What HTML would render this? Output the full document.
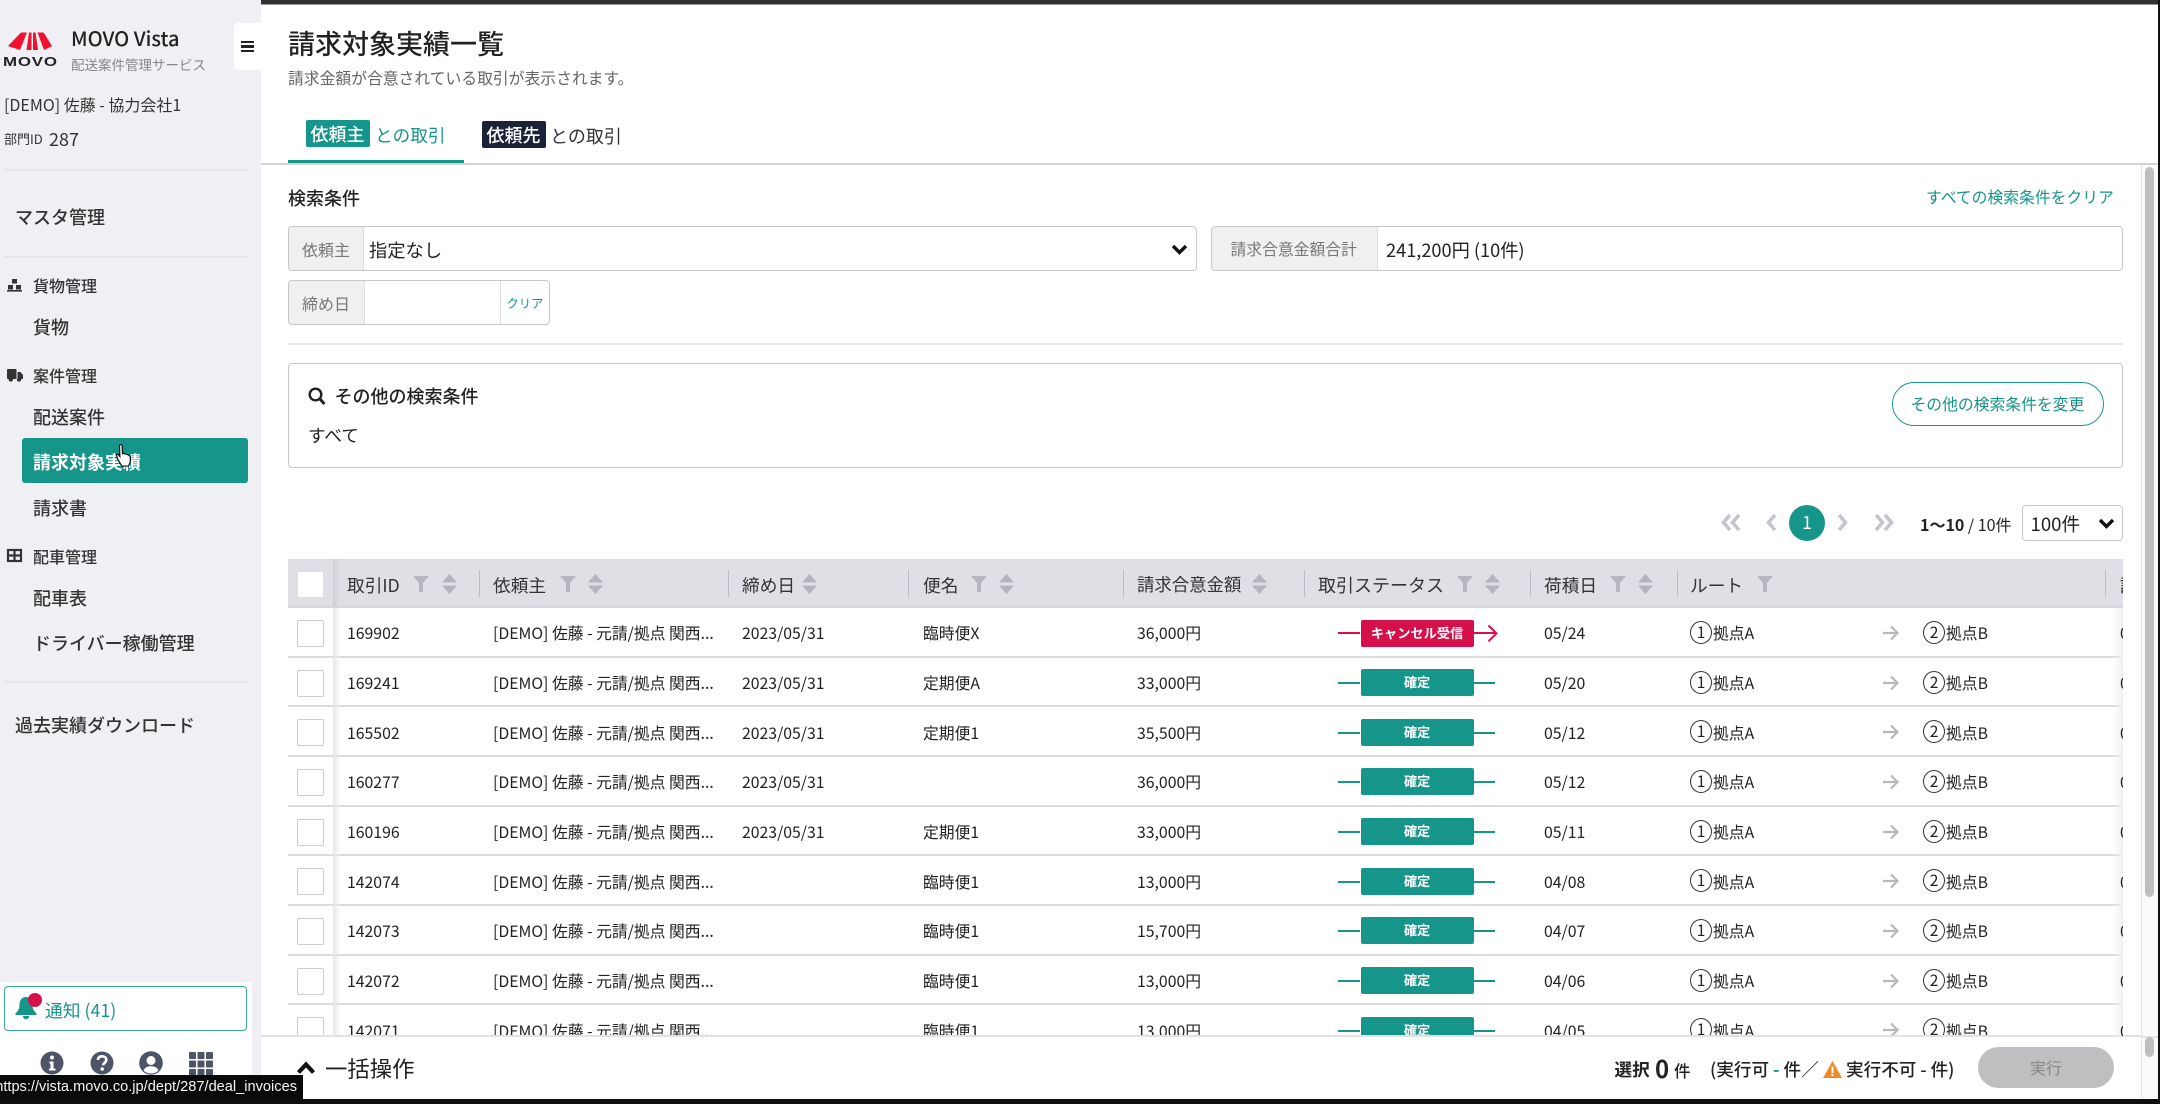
<!DOCTYPE html>
<html lang="ja">
<head>
<meta charset="utf-8">
<title>請求対象実績一覧</title>
<style>
html,body{margin:0;padding:0;background:#fff;}
body{width:2160px;height:1104px;overflow:hidden;position:relative;font-family:"Noto Sans CJK JP","Liberation Sans",sans-serif;color:#222;}
#w{position:absolute;left:0;top:0;width:2160px;height:1104px;overflow:hidden;background:#fff;filter:blur(.35px);}
.a{position:absolute;}
.t{position:absolute;white-space:nowrap;line-height:0;}
svg{position:absolute;display:block;overflow:visible;}
#side{position:absolute;left:0;top:0;width:261px;height:1104px;background:#f0eff3;}
.hr{position:absolute;left:4px;width:244px;height:2px;background:#e6e5e9;}
.nav{font-size:18px;left:33px;color:#333;font-weight:500;}
.grp{font-size:16px;left:33px;color:#333;font-weight:500;}
.lab{position:absolute;background:#f0eff2;border-right:1px solid #ddd;box-sizing:border-box;color:#777;font-size:16px;}
.box{position:absolute;border:1.5px solid #c8c8c8;border-radius:4px;box-sizing:border-box;background:#fff;overflow:hidden;}
#thead{position:absolute;left:288px;top:559px;width:1835px;height:49px;background:#dfdfe5;border-bottom:2px solid #d6d6dc;box-sizing:border-box;overflow:hidden;}
#thead .t{top:25.5px;font-size:17.7px;color:#333;}
.dv{position:absolute;top:11px;width:1px;height:27px;background:#bcbcc4;}
.f{top:17px;}
.s{top:15px;}
#rows{position:absolute;left:288px;top:608px;width:1835px;height:428px;overflow:hidden;}
.r{position:absolute;left:0;width:1835px;height:49.65px;border-bottom:2px solid #dcdcdc;box-sizing:border-box;}
.r .t{top:25.4px;font-size:15.8px;color:#222;}
.ck{position:absolute;left:9px;top:12px;width:27px;height:27px;border:1.5px solid #ccc;border-radius:2px;background:#fff;box-sizing:border-box;}
.c1{left:59px}.c2{left:205px}.c3{left:454px}.c4{left:635px}.c5{left:849px}.c6{left:1256px}.c7{left:1832px;z-index:3;}
.b{position:absolute;left:1072.5px;top:11.5px;width:113px;height:27px;border-radius:2px;background:#16958a;color:#fff;font-size:13.2px;font-weight:700;text-align:center;line-height:26px;}
.ln{position:absolute;top:24.4px;height:2px;background:#16958a;width:22px;}
.n{position:absolute;top:13px;width:22px;height:23px;border:1.5px solid #333;border-radius:50%;box-sizing:border-box;font-size:15.5px;text-align:center;line-height:20px;color:#222;}
.n1{left:1402px}.n2{left:1635px}
.p1{left:1425px}.p2{left:1658px}
.ar{left:1595px;top:17px;}
</style>
</head>
<body>
<div id="w">
<div class="a" style="left:0;top:0;width:2160px;height:4px;background:#303030;"></div>
<div class="a" style="left:0;top:4px;width:2160px;height:1px;background:#999;"></div>

<div id="side">
  <svg style="left:0;top:0" width="60" height="70">
    <polygon points="8,46 21,32.5 27,32.5 20,50" fill="#f0102f"/>
    <polygon points="29,32.5 31.5,32.5 31.5,50 26.5,50" fill="#f0102f"/>
    <polygon points="33,32.5 35.5,32.5 38,50 33,50" fill="#f0102f"/>
    <polygon points="37.5,32.5 43.5,32.5 52,46 44,50" fill="#f0102f"/>
  </svg>
  <div class="t" style="left:3px;top:61.5px;font:700 12.6px/0 'Liberation Sans',sans-serif;letter-spacing:.6px;transform:scaleX(1.34);transform-origin:left center;color:#222;">MOVO</div>
  <div class="t" style="left:71px;top:38px;font-size:20px;font-weight:500;color:#222;">MOVO Vista</div>
  <div class="t" style="left:71px;top:64px;font-size:13.5px;color:#888;">配送案件管理サービス</div>
  <div class="a" style="left:234px;top:23px;width:27px;height:47px;background:#fff;border-radius:4px 0 0 4px;"></div>
  <div class="a" style="left:241px;top:41px;width:13px;height:2.4px;background:#222;"></div>
  <div class="a" style="left:241px;top:45.3px;width:13px;height:2.4px;background:#222;"></div>
  <div class="a" style="left:241px;top:49.6px;width:13px;height:2.4px;background:#222;"></div>

  <div class="t" style="left:4px;top:104px;font-size:16px;color:#333;">[DEMO] 佐藤 - 協力会社1</div>
  <div class="t" style="left:4px;top:139px;font-size:13px;color:#333;">部門ID</div>
  <div class="t" style="left:49px;top:139px;font-size:18px;color:#333;">287</div>
  <div class="hr" style="top:169px;"></div>
  <div class="t" style="left:15px;top:217px;font-size:18px;font-weight:500;color:#333;">マスタ管理</div>
  <div class="hr" style="top:256px;"></div>

  <svg style="left:7px;top:279px" width="15" height="13" fill="#333"><rect x="5" y="0" width="5" height="4.5"/><rect x="1" y="6" width="5" height="4.5"/><rect x="9" y="6" width="5" height="4.5"/><rect x="0" y="11" width="15" height="1.6"/></svg>
  <div class="t grp" style="top:285px;">貨物管理</div>
  <div class="t nav" style="top:327px;">貨物</div>

  <svg style="left:7px;top:369px" width="16" height="13" fill="#333"><rect x="0" y="0" width="9.5" height="10" rx="1"/><path d="M10.5 3h3l2.5 3v4h-5.5z"/><circle cx="3.8" cy="10.5" r="2.2"/><circle cx="12" cy="10.5" r="2.2"/></svg>
  <div class="t grp" style="top:375px;">案件管理</div>
  <div class="t nav" style="top:417px;">配送案件</div>

  <div class="a" style="left:21.5px;top:438px;width:226px;height:45px;background:#16958a;border-radius:3px;"></div>
  <div class="t" style="left:33px;top:461.5px;font-size:18px;font-weight:700;color:#fff;">請求対象実績</div>
  <svg style="left:115px;top:443px" width="18" height="27" viewBox="0 0 16 24"><path d="M4 2c1-1 2.300-.5 2.400.8l.3 6.700 1-.2 1 .3 1.200 .2 1.400 .6c1.300 .5 2.400 1.300 2.400 2.700l-.2 3.900-1.500 3.500H6L2.500 14.500 1.300 11c0-1 1-1.300 1.800-.6l1.200 1.600z" fill="#fff" stroke="#111" stroke-width="1.100"/></svg>

  <div class="t nav" style="top:508px;">請求書</div>
  <svg style="left:7px;top:549px" width="15" height="13" fill="none" stroke="#333" stroke-width="2.200"><rect x="1" y="1" width="13" height="11"/><path d="M1 6.500h13M7.500 1v11"/></svg>
  <div class="t grp" style="top:556px;">配車管理</div>
  <div class="t nav" style="top:598px;">配車表</div>
  <div class="t nav" style="top:642.5px;">ドライバー稼働管理</div>
  <div class="hr" style="top:681px;"></div>
  <div class="t" style="left:15px;top:725px;font-size:18px;font-weight:500;color:#333;">過去実績ダウンロード</div>

  <div class="a" style="left:0;top:982px;width:252px;height:100px;background:#fff;"></div>
  <div class="a" style="left:4px;top:986px;width:243px;height:45px;border:1.5px solid #3aa99e;border-radius:4px;box-sizing:border-box;"></div>
  <svg style="left:15px;top:996px" width="22" height="24" viewBox="0 0 22 24"><path d="M11 1c4.500 0 6.500 3.500 6.500 8 0 4 1.500 6 4 8.500V19H.5v-1.500C3 15 4.500 13 4.500 9 4.500 4.500 6.500 1 11 1z" fill="#16958a"/><path d="M8 20h6c0 2-1.300 3.200-3 3.200S8 22 8 20z" fill="#16958a"/></svg>
  <div class="a" style="left:27.500px;top:992.500px;width:14px;height:14px;border-radius:50%;background:#d5104a;"></div>
  <div class="t" style="left:45px;top:1010px;font-size:17.8px;color:#16958a;">通知 (41)</div>

  <svg style="left:40px;top:1051px" width="24" height="24"><circle cx="12" cy="12" r="11.500" fill="#4e5468"/><circle cx="12" cy="6.500" r="2" fill="#fff"/><path d="M9.500 10.500h4v7h2v2h-6.500v-2h1.500v-5h-1z" fill="#fff"/></svg>
  <svg style="left:90px;top:1051px" width="24" height="24"><circle cx="12" cy="12" r="11.500" fill="#4e5468"/><path d="M7.800 9c.3-2.500 2-3.700 4.300-3.700 2.400 0 4.200 1.400 4.200 3.500 0 3-3.200 3-3.200 5.500" fill="none" stroke="#fff" stroke-width="2.600"/><circle cx="12.200" cy="18" r="1.800" fill="#fff"/></svg>
  <svg style="left:139px;top:1051px" width="24" height="24"><circle cx="12" cy="12" r="11.800" fill="#4e5468"/><circle cx="12" cy="9.500" r="4.500" fill="#fff"/><path d="M4.500 19.500c1.500-3 4-4.200 7.500-4.200s6 1.200 7.500 4.200c-2 2-4.500 3-7.500 3s-5.500-1-7.500-3z" fill="#fff"/></svg>
  <svg style="left:189px;top:1052px" width="24" height="24" fill="#4e5468"><rect x="0" y="0" width="7" height="7" rx="1"/><rect x="8.500" y="0" width="7" height="7" rx="1"/><rect x="17" y="0" width="7" height="7" rx="1"/><rect x="0" y="8.500" width="7" height="7" rx="1"/><rect x="8.500" y="8.500" width="7" height="7" rx="1"/><rect x="17" y="8.500" width="7" height="7" rx="1"/><rect x="0" y="17" width="7" height="7" rx="1"/><rect x="8.500" y="17" width="7" height="7" rx="1"/><rect x="17" y="17" width="7" height="7" rx="1"/></svg>
</div>

<!-- header -->
<div class="t" style="left:288px;top:43px;font-size:27px;font-weight:500;color:#222;">請求対象実績一覧</div>
<div class="t" style="left:288px;top:78px;font-size:15.8px;color:#666;">請求金額が合意されている取引が表示されます。</div>

<div class="a" style="left:306px;top:120px;width:64px;height:27px;background:#16958a;border-radius:2px;"></div>
<div class="t" style="left:310.500px;top:134px;font-size:18px;font-weight:500;color:#fff;">依頼主</div>
<div class="t" style="left:375px;top:135px;font-size:17.7px;color:#16958a;">との取引</div>
<div class="a" style="left:482px;top:121px;width:64px;height:27px;background:#1a2238;border-radius:2px;"></div>
<div class="t" style="left:486.500px;top:135px;font-size:18px;font-weight:500;color:#fff;">依頼先</div>
<div class="t" style="left:550px;top:136px;font-size:18px;color:#333;">との取引</div>
<div class="a" style="left:261px;top:163px;width:1899px;height:2px;background:#d4d4d4;"></div>
<div class="a" style="left:288px;top:160px;width:176px;height:3px;background:#16958a;"></div>

<!-- search -->
<div class="t" style="left:288px;top:198px;font-size:18px;font-weight:500;color:#222;">検索条件</div>
<div class="t" style="left:1926px;top:197px;font-size:15.8px;color:#16958a;">すべての検索条件をクリア</div>

<div class="box" style="left:288px;top:226px;width:909px;height:44.500px;">
  <div class="lab" style="left:0;top:0;width:75px;height:43px;"></div>
  <div class="t" style="left:13px;top:21.500px;font-size:16px;color:#777;">依頼主</div>
  <div class="t" style="left:80px;top:23px;font-size:18.300px;color:#222;">指定なし</div>
  <svg style="left:882px;top:17px" width="17" height="11"><path d="M2 2l6.500 6.500L15 2" fill="none" stroke="#111" stroke-width="3.400"/></svg>
</div>
<div class="box" style="left:1211px;top:226px;width:912px;height:44.500px;">
  <div class="lab" style="left:0;top:0;width:166px;height:43px;"></div>
  <div class="t" style="left:18.500px;top:21.500px;font-size:15.800px;color:#777;">請求合意金額合計</div>
  <div class="t" style="left:174px;top:22.500px;font-size:18.200px;color:#222;">241,200円 (10件)</div>
</div>

<div class="box" style="left:288px;top:280px;width:262px;height:45px;">
  <div class="lab" style="left:0;top:0;width:76px;height:43px;"></div>
  <div class="t" style="left:13px;top:22px;font-size:16px;color:#777;">締め日</div>
  <div class="a" style="left:211px;top:0;width:1px;height:43px;background:#ddd;"></div>
  <div class="t" style="left:217.500px;top:22px;font-size:12.300px;color:#16958a;">クリア</div>
</div>

<div class="a" style="left:288px;top:343px;width:1835px;height:1.500px;background:#e6e6e6;"></div>

<div class="box" style="left:288px;top:363px;width:1835px;height:105px;">
  <svg style="left:19px;top:23px" width="18" height="19"><circle cx="7.500" cy="7.500" r="5.800" fill="none" stroke="#222" stroke-width="2.400"/><path d="M11.500 11.500l5 5.500" stroke="#222" stroke-width="3"/></svg>
  <div class="t" style="left:45.500px;top:32px;font-size:18px;font-weight:500;color:#222;">その他の検索条件</div>
  <div class="t" style="left:19px;top:72px;font-size:17.600px;color:#222;">すべて</div>
</div>
<div class="a" style="left:1892px;top:382px;width:212px;height:44px;border:1.500px solid #16958a;border-radius:22px;box-sizing:border-box;background:#fff;"></div>
<div class="t" style="left:1910.500px;top:403.500px;font-size:15.800px;color:#16958a;">その他の検索条件を変更</div>

<!-- pagination -->
<svg style="left:1721px;top:513px" width="20" height="19" fill="none" stroke="#c4c4cc" stroke-width="3.600"><path d="M9 2L2.500 9.500 9 17M18 2l-6.500 7.500L18 17"/></svg>
<svg style="left:1766px;top:513px" width="11" height="19" fill="none" stroke="#c4c4cc" stroke-width="3.600"><path d="M9 2L2.500 9.500 9 17"/></svg>
<div class="a" style="left:1789px;top:505px;width:36px;height:36px;border-radius:50%;background:#16958a;color:#fff;font-size:18px;text-align:center;line-height:35px;">1</div>
<svg style="left:1837px;top:513px" width="11" height="19" fill="none" stroke="#c4c4cc" stroke-width="3.600"><path d="M2 2l6.500 7.500L2 17"/></svg>
<svg style="left:1874px;top:513px" width="20" height="19" fill="none" stroke="#c4c4cc" stroke-width="3.600"><path d="M2 2l6.500 7.500L2 17M11 2l6.500 7.500L11 17"/></svg>
<div class="t" style="left:1920px;top:524px;font-size:16px;color:#222;"><b>1〜10</b> / 10件</div>
<div class="box" style="left:2021.500px;top:505px;width:101px;height:36px;">
  <div class="t" style="left:8px;top:17.500px;font-size:18.600px;color:#222;">100件</div>
  <svg style="left:75px;top:12px" width="17" height="11"><path d="M2 2l6.500 6.500L15 2" fill="none" stroke="#111" stroke-width="3.400"/></svg>
</div>

<!-- table head -->
<div id="thead">
  <div class="a" style="left:9px;top:11.500px;width:27px;height:27px;background:#fff;border:1px solid #ddd;border-radius:2px;box-sizing:border-box;"></div>
  <div class="a" style="left:45px;top:0;width:7px;height:49px;background:linear-gradient(90deg,#cfcfd6,#dfdfe5);"></div>
  <div class="t" style="left:59px;">取引ID</div>
  <svg class="f" style="left:125px" width="16" height="16"><path d="M0 0h16L10 7V16H6V7z" fill="#b6b6be"/></svg>
  <svg class="s" style="left:154px" width="15" height="20"><path d="M7.500 0L15 8.500H0zM0 11.500h15L7.500 20z" fill="#b4b4bd"/></svg>
  <div class="dv" style="left:191px;"></div>
  <div class="t" style="left:205px;">依頼主</div>
  <svg class="f" style="left:272px" width="16" height="16"><path d="M0 0h16L10 7V16H6V7z" fill="#b6b6be"/></svg>
  <svg class="s" style="left:300px" width="15" height="20"><path d="M7.500 0L15 8.500H0zM0 11.500h15L7.500 20z" fill="#b4b4bd"/></svg>
  <div class="dv" style="left:439.500px;"></div>
  <div class="t" style="left:454px;">締め日</div>
  <svg class="s" style="left:514px" width="15" height="20"><path d="M7.500 0L15 8.500H0zM0 11.500h15L7.500 20z" fill="#b4b4bd"/></svg>
  <div class="dv" style="left:620px;"></div>
  <div class="t" style="left:635px;">便名</div>
  <svg class="f" style="left:683px" width="16" height="16"><path d="M0 0h16L10 7V16H6V7z" fill="#b6b6be"/></svg>
  <svg class="s" style="left:711px" width="15" height="20"><path d="M7.500 0L15 8.500H0zM0 11.500h15L7.500 20z" fill="#b4b4bd"/></svg>
  <div class="dv" style="left:834.500px;"></div>
  <div class="t" style="left:849px;font-size:17.400px;">請求合意金額</div>
  <svg class="s" style="left:964px" width="15" height="20"><path d="M7.500 0L15 8.500H0zM0 11.500h15L7.500 20z" fill="#b4b4bd"/></svg>
  <div class="dv" style="left:1015.500px;"></div>
  <div class="t" style="left:1030px;font-size:18px;">取引ステータス</div>
  <svg class="f" style="left:1169px" width="16" height="16"><path d="M0 0h16L10 7V16H6V7z" fill="#b6b6be"/></svg>
  <svg class="s" style="left:1197px" width="15" height="20"><path d="M7.500 0L15 8.500H0zM0 11.500h15L7.500 20z" fill="#b4b4bd"/></svg>
  <div class="dv" style="left:1241.500px;"></div>
  <div class="t" style="left:1256px;">荷積日</div>
  <svg class="f" style="left:1322px" width="16" height="16"><path d="M0 0h16L10 7V16H6V7z" fill="#b6b6be"/></svg>
  <svg class="s" style="left:1350px" width="15" height="20"><path d="M7.500 0L15 8.500H0zM0 11.500h15L7.500 20z" fill="#b4b4bd"/></svg>
  <div class="dv" style="left:1388.500px;"></div>
  <div class="t" style="left:1402px;">ルート</div>
  <svg class="f" style="left:1469px" width="16" height="16"><path d="M0 0h16L10 7V16H6V7z" fill="#b6b6be"/></svg>
  <div class="dv" style="left:1817px;"></div>
  <div class="t" style="left:1832px;color:#222;">請</div>
</div>

<!-- rows -->
<div id="rows">
  <div class="a" style="left:1825px;top:0;width:10px;height:428px;background:linear-gradient(270deg,#f0f0f0,rgba(255,255,255,0));z-index:2;"></div>
  <div class="r" style="top:0;">
    <div class="ck"></div><div class="t c1">169902</div><div class="t c2">[DEMO] 佐藤 - 元請/拠点 関西...</div><div class="t c3">2023/05/31</div><div class="t c4">臨時便X</div><div class="t c5">36,000円</div>
    <div class="ln" style="left:1050px;background:#d5104a;"></div><div class="ln" style="left:1185px;background:#d5104a;"></div>
    <svg style="left:1199px;top:16px" width="11" height="18" fill="none" stroke="#d5104a" stroke-width="2"><path d="M1.500 1.500l8 7.900-8 7.900"/></svg>
    <div class="b" style="background:#d5104a;">キャンセル受信</div>
    <div class="t c6">05/24</div><div class="n n1">1</div><div class="t p1">拠点A</div>
    <svg class="ar" width="16" height="16" fill="none" stroke="#b8b8b8" stroke-width="2.200"><path d="M0 8h14M8 1.500l6.500 6.500L8 14.500"/></svg>
    <div class="n n2">2</div><div class="t p2">拠点B</div><div class="t c7">0</div>
  </div>
  <div class="r" style="top:49.650px;">
    <div class="ck"></div><div class="t c1">169241</div><div class="t c2">[DEMO] 佐藤 - 元請/拠点 関西...</div><div class="t c3">2023/05/31</div><div class="t c4">定期便A</div><div class="t c5">33,000円</div>
    <div class="ln" style="left:1050px;"></div><div class="ln" style="left:1185px;"></div><div class="b">確定</div>
    <div class="t c6">05/20</div><div class="n n1">1</div><div class="t p1">拠点A</div>
    <svg class="ar" width="16" height="16" fill="none" stroke="#b8b8b8" stroke-width="2.200"><path d="M0 8h14M8 1.500l6.500 6.500L8 14.500"/></svg>
    <div class="n n2">2</div><div class="t p2">拠点B</div><div class="t c7">0</div>
  </div>
  <div class="r" style="top:99.300px;">
    <div class="ck"></div><div class="t c1">165502</div><div class="t c2">[DEMO] 佐藤 - 元請/拠点 関西...</div><div class="t c3">2023/05/31</div><div class="t c4">定期便1</div><div class="t c5">35,500円</div>
    <div class="ln" style="left:1050px;"></div><div class="ln" style="left:1185px;"></div><div class="b">確定</div>
    <div class="t c6">05/12</div><div class="n n1">1</div><div class="t p1">拠点A</div>
    <svg class="ar" width="16" height="16" fill="none" stroke="#b8b8b8" stroke-width="2.200"><path d="M0 8h14M8 1.500l6.500 6.500L8 14.500"/></svg>
    <div class="n n2">2</div><div class="t p2">拠点B</div><div class="t c7">0</div>
  </div>
  <div class="r" style="top:148.950px;">
    <div class="ck"></div><div class="t c1">160277</div><div class="t c2">[DEMO] 佐藤 - 元請/拠点 関西...</div><div class="t c3">2023/05/31</div><div class="t c5">36,000円</div>
    <div class="ln" style="left:1050px;"></div><div class="ln" style="left:1185px;"></div><div class="b">確定</div>
    <div class="t c6">05/12</div><div class="n n1">1</div><div class="t p1">拠点A</div>
    <svg class="ar" width="16" height="16" fill="none" stroke="#b8b8b8" stroke-width="2.200"><path d="M0 8h14M8 1.500l6.500 6.500L8 14.500"/></svg>
    <div class="n n2">2</div><div class="t p2">拠点B</div><div class="t c7">0</div>
  </div>
  <div class="r" style="top:198.600px;">
    <div class="ck"></div><div class="t c1">160196</div><div class="t c2">[DEMO] 佐藤 - 元請/拠点 関西...</div><div class="t c3">2023/05/31</div><div class="t c4">定期便1</div><div class="t c5">33,000円</div>
    <div class="ln" style="left:1050px;"></div><div class="ln" style="left:1185px;"></div><div class="b">確定</div>
    <div class="t c6">05/11</div><div class="n n1">1</div><div class="t p1">拠点A</div>
    <svg class="ar" width="16" height="16" fill="none" stroke="#b8b8b8" stroke-width="2.200"><path d="M0 8h14M8 1.500l6.500 6.500L8 14.500"/></svg>
    <div class="n n2">2</div><div class="t p2">拠点B</div><div class="t c7">0</div>
  </div>
  <div class="r" style="top:248.250px;">
    <div class="ck"></div><div class="t c1">142074</div><div class="t c2">[DEMO] 佐藤 - 元請/拠点 関西...</div><div class="t c4">臨時便1</div><div class="t c5">13,000円</div>
    <div class="ln" style="left:1050px;"></div><div class="ln" style="left:1185px;"></div><div class="b">確定</div>
    <div class="t c6">04/08</div><div class="n n1">1</div><div class="t p1">拠点A</div>
    <svg class="ar" width="16" height="16" fill="none" stroke="#b8b8b8" stroke-width="2.200"><path d="M0 8h14M8 1.500l6.500 6.500L8 14.500"/></svg>
    <div class="n n2">2</div><div class="t p2">拠点B</div><div class="t c7">0</div>
  </div>
  <div class="r" style="top:297.900px;">
    <div class="ck"></div><div class="t c1">142073</div><div class="t c2">[DEMO] 佐藤 - 元請/拠点 関西...</div><div class="t c4">臨時便1</div><div class="t c5">15,700円</div>
    <div class="ln" style="left:1050px;"></div><div class="ln" style="left:1185px;"></div><div class="b">確定</div>
    <div class="t c6">04/07</div><div class="n n1">1</div><div class="t p1">拠点A</div>
    <svg class="ar" width="16" height="16" fill="none" stroke="#b8b8b8" stroke-width="2.200"><path d="M0 8h14M8 1.500l6.500 6.500L8 14.500"/></svg>
    <div class="n n2">2</div><div class="t p2">拠点B</div><div class="t c7">0</div>
  </div>
  <div class="r" style="top:347.550px;">
    <div class="ck"></div><div class="t c1">142072</div><div class="t c2">[DEMO] 佐藤 - 元請/拠点 関西...</div><div class="t c4">臨時便1</div><div class="t c5">13,000円</div>
    <div class="ln" style="left:1050px;"></div><div class="ln" style="left:1185px;"></div><div class="b">確定</div>
    <div class="t c6">04/06</div><div class="n n1">1</div><div class="t p1">拠点A</div>
    <svg class="ar" width="16" height="16" fill="none" stroke="#b8b8b8" stroke-width="2.200"><path d="M0 8h14M8 1.500l6.500 6.500L8 14.500"/></svg>
    <div class="n n2">2</div><div class="t p2">拠点B</div><div class="t c7">0</div>
  </div>
  <div class="r" style="top:397.200px;">
    <div class="ck"></div><div class="t c1">142071</div><div class="t c2">[DEMO] 佐藤 - 元請/拠点 関西...</div><div class="t c4">臨時便1</div><div class="t c5">13,000円</div>
    <div class="ln" style="left:1050px;"></div><div class="ln" style="left:1185px;"></div><div class="b">確定</div>
    <div class="t c6">04/05</div><div class="n n1">1</div><div class="t p1">拠点A</div>
    <svg class="ar" width="16" height="16" fill="none" stroke="#b8b8b8" stroke-width="2.200"><path d="M0 8h14M8 1.500l6.500 6.500L8 14.500"/></svg>
    <div class="n n2">2</div><div class="t p2">拠点B</div><div class="t c7">0</div>
  </div>
  <div class="a" style="left:45px;top:0;width:8px;height:428px;background:linear-gradient(90deg,#e9e9e9,rgba(255,255,255,0));"></div>
</div>

<!-- bottom bar -->
<div class="a" style="left:261px;top:1035px;width:1880px;height:64px;background:#fff;border-top:2px solid #e2e2e2;box-sizing:border-box;"></div>
<svg style="left:296px;top:1060px" width="20" height="15"><path d="M2.500 12.500L10 4.500l7.500 8" fill="none" stroke="#111" stroke-width="4.200"/></svg>
<div class="t" style="left:325px;top:1068px;font-size:22.400px;color:#222;">一括操作</div>
<div class="t" style="left:1614.500px;top:1070px;font-size:17.600px;font-weight:700;color:#222;">選択</div>
<div class="t" style="left:1655px;top:1068px;font-size:24px;font-weight:700;color:#222;">0</div>
<div class="t" style="left:1674px;top:1070px;font-size:16.500px;font-weight:500;color:#222;">件</div>
<div class="t" style="left:1710px;top:1070px;font-size:17.600px;font-weight:500;color:#222;">(実行可 <span style="color:#16958a;font-weight:700;">-</span> 件／</div>
<svg style="left:1823px;top:1061px" width="19" height="17"><path d="M9.500 0L19 17H0z" fill="#f08a24"/><rect x="8.500" y="5.500" width="2" height="6.500" fill="#fff"/><rect x="8.500" y="13" width="2" height="2" fill="#fff"/></svg>
<div class="t" style="left:1846px;top:1070px;font-size:17.600px;font-weight:500;color:#222;">実行不可 - 件)</div>
<div class="a" style="left:1978px;top:1047px;width:136px;height:41px;background:#bfbfc1;border-radius:21px;"></div>
<div class="t" style="left:2030px;top:1067px;font-size:16px;color:#888;">実行</div>

<!-- scrollbars -->
<div class="a" style="left:2141px;top:165px;width:17px;height:933px;background:#fbfbfb;border-left:1px solid #e4e4e4;box-sizing:border-box;"></div>
<div class="a" style="left:2141px;top:1036px;width:17px;height:2px;background:#e4e4e4;"></div>
<div class="a" style="left:2145px;top:167px;width:9px;height:730px;background:#bfbfc2;border-radius:5px;"></div>
<div class="a" style="left:2145px;top:1037px;width:9px;height:20px;background:#bfbfc2;border-radius:5px;"></div>

<!-- screen edges -->
<div class="a" style="left:0;top:1098.500px;width:2160px;height:6px;background:#0f0f0f;"></div>
<div class="a" style="left:2158px;top:0;width:2px;height:1104px;background:#111;"></div>

<!-- status tooltip -->
<div class="a" style="left:0;top:1075px;width:303px;height:24px;background:#0a0a0a;overflow:hidden;display:flex;justify-content:flex-end;align-items:center;padding-right:6px;box-sizing:border-box;">
  <span style="font:14.600px/24px 'Liberation Sans',sans-serif;color:#f4f4f4;white-space:nowrap;flex:none;">https://vista.movo.co.jp/dept/287/deal_invoices</span>
</div>
</div>
</body>
</html>
